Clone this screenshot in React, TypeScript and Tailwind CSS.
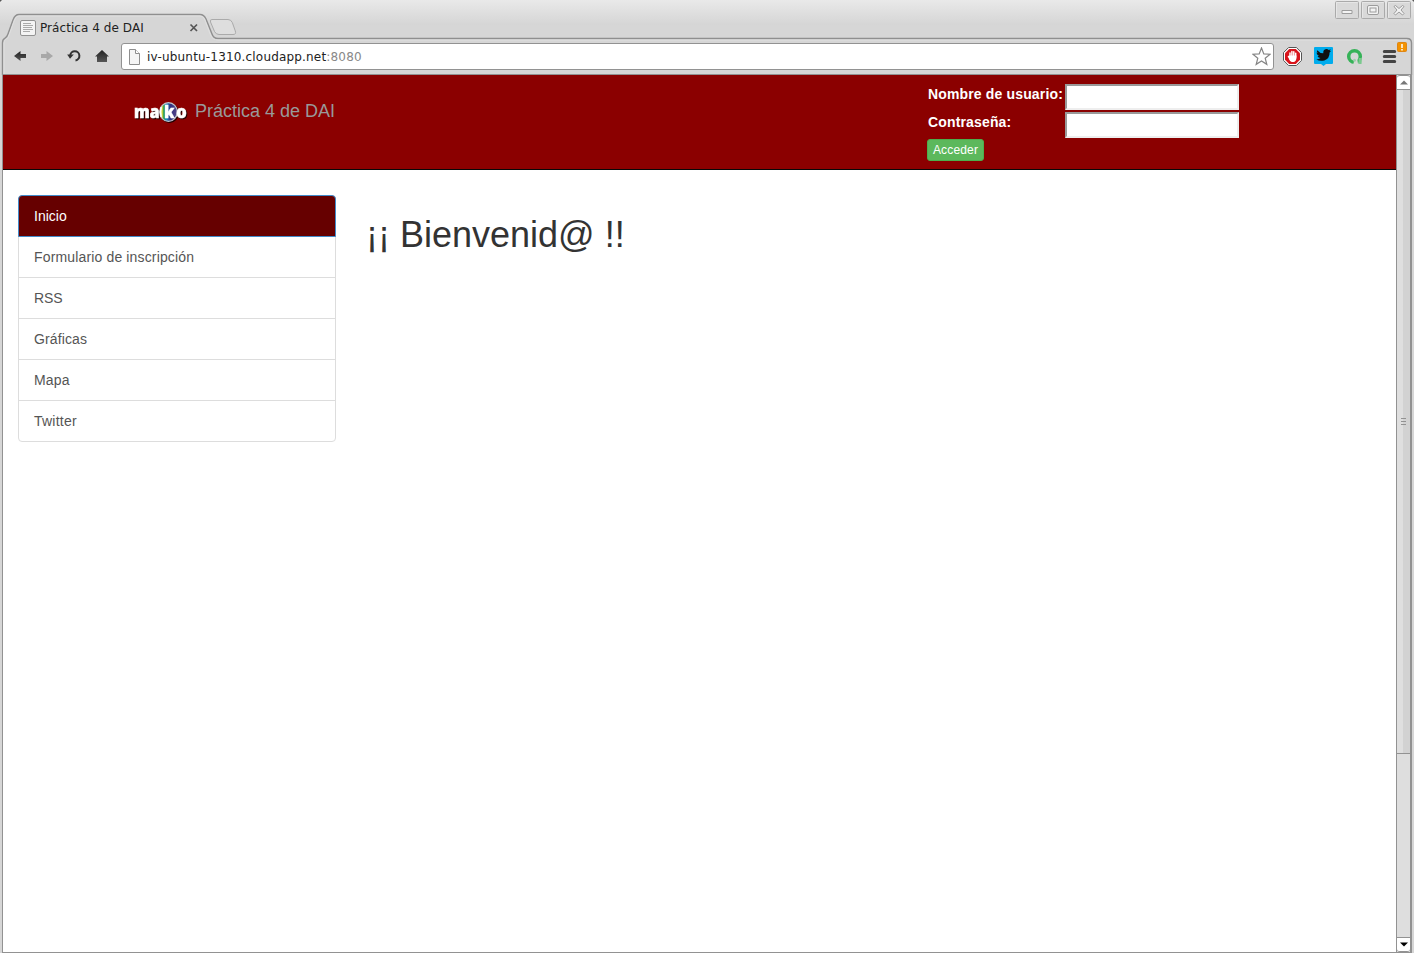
import type { ReactNode } from "react";

const menu = [
  { label: "Inicio", spacing: "tracking-normal" },
  { label: "Formulario de inscripción", spacing: "tracking-[0.15px]" },
  { label: "RSS", spacing: "tracking-[-0.1px]" },
  { label: "Gráficas", spacing: "tracking-[0.12px]" },
  { label: "Mapa", spacing: "tracking-[0.2px]" },
  { label: "Twitter", spacing: "tracking-[0.22px]" },
];

function TabStrip() {
  return (
    <header className="relative flex h-[38px] shrink-0 items-start justify-between">
      <svg className="absolute left-0 top-0" width="1414" height="75" viewBox="0 0 1414 75" fill="none">
        <defs>
          <linearGradient id="strip" x1="0" y1="0" x2="0" y2="1">
            <stop offset="0" stopColor="#e9e9e9" />
            <stop offset="1" stopColor="#d5d5d5" />
          </linearGradient>
        </defs>
        <rect width="1414" height="25" fill="url(#strip)" />
        <path d="M0 0h2L0 2zM1412 0h2v2z" fill="#555" />
        <path d="M2.500 80V43Q2.500 39.500 5 38.200Q7 37 8 34L13 20Q15 14.500 19 14.500H200Q204 14.500 206 19L212 34Q213.500 38.500 218 38.500H1407Q1411.500 38.500 1411.500 43V80Z" fill="#d6d6d6" stroke="#8f8f8f" strokeWidth="1.4" />
        <path d="M4 76V43Q4 40 6.500 39Q8.500 38 9.500 34L14.500 20Q16 16 19 16H200Q203 16 204.500 19L210.500 35Q212.500 40 218 40H1407" stroke="#e0e0e0" />
        <path d="M212 19.500H228Q231 19.500 232.300 22.500L235.300 31Q236.500 34.500 233 34.500H219Q216 34.500 214.500 31.500L210.500 22Q209.600 19.500 212 19.500Z" fill="#dedede" stroke="#aaa" />
      </svg>
      <div className="relative ml-[20px] mt-[19px] flex h-[18px] w-[179px] items-start text-[12px] text-[#222]">
        <svg width="16" height="17" viewBox="0 0 16 17">
          <rect x=".5" y="1.500" width="15" height="15" rx="1.500" fill="#f4f4f4" stroke="#929292" />
          <path d="M3 4.500h8M3 6.500h10M3 8.500h9M3 10.500h10M3 12.500h7" stroke="#aaa" />
        </svg>
        <span className="ml-[4px] whitespace-nowrap leading-[18px] tracking-[0.06px]">Práctica 4 de DAI</span>
        <svg className="ml-auto mt-[4px]" width="10" height="10" viewBox="0 0 10 10">
          <path d="M1.500 1.500l6.500 6.500m0-6.500l-6.500 6.500" stroke="#555" strokeWidth="1.700" />
        </svg>
      </div>
      <div className="relative mr-[3px] mt-[1px] flex gap-[2px]">
        <WindowButton><path d="M7.500 9.500h10v3h-10z" /></WindowButton>
        <WindowButton><rect x="7" y="4.500" width="11" height="9" rx="1.500" /><rect x="9.500" y="7" width="6" height="4" /></WindowButton>
        <WindowButton><path d="M7.500 5.500l1.500-1 3.500 3 3.500-3 1.500 1-3 3.500 3 3.500-1.500 1.500-3.500-3-3.500 3-1.500-1.500 3-3.500z" /></WindowButton>
      </div>
    </header>
  );
}

function WindowButton({ children }: { children: ReactNode }) {
  return (
    <svg width="24" height="18" viewBox="0 0 24 18">
      <rect x=".5" y=".5" width="23" height="17" rx="1" fill="#d9d9d9" stroke="#aaa" />
      <path d="M1.500 16.500v-15h21" stroke="#e6e6e6" fill="none" />
      <g fill="#f3f3f3" stroke="#9c9c9c" transform="translate(-.5)">{children}</g>
    </svg>
  );
}

function Toolbar() {
  return (
    <div className="relative mx-[2px] flex h-[37px] shrink-0 items-start border-b border-[#929292]">
      <svg className="shrink-0" width="119" height="36" viewBox="2 38 119 36">
        <defs>
          <linearGradient id="dark" x1="0" y1="0" x2="0" y2="1">
            <stop offset="0" stopColor="#222" />
            <stop offset="1" stopColor="#565656" />
          </linearGradient>
        </defs>
        <path d="M14 56l6.500-5v3H26v4h-5.500v3z" fill="url(#dark)" />
        <path d="M53 56l-6.500-5v3H41v4h5.500v3z" fill="#a8a8a8" />
        <path d="M70.200 55.500a4.600 4.600 0 1 1 5.300 4.900" fill="none" stroke="#333" strokeWidth="2" />
        <path d="M67.200 54.500h6.600L70 58.800z" fill="#333" />
        <path d="M102 50l7 6.500h-2V62H97v-5.500h-2z" fill="url(#dark)" />
      </svg>
      <div className="mt-[5px] flex h-[27px] w-[1153px] shrink-0 items-center rounded-[3px] border border-[#929292] bg-white pl-[6px] pr-[2px] text-[12px]">
        <svg className="shrink-0" width="13" height="16" viewBox="0 0 13 16">
          <path d="M1.500.5h6l4 4v11h-10z" fill="#f5f5f5" stroke="#8e8e8e" />
          <path d="M7.500.5v4h4" fill="#fff" stroke="#8e8e8e" />
        </svg>
        <span className="ml-[6px] tracking-[0.18px] text-[#222]">iv-ubuntu-1310.cloudapp.net<span className="text-[#888]">:8080</span></span>
        <svg className="ml-auto" width="19" height="19" viewBox="0 0 19 19">
          <path d="M9.500 1l2.300 5.900 6.300.3-4.900 4 1.600 6.100-5.300-3.400-5.300 3.400 1.600-6.100-4.900-4 6.300-.3z" fill="#fff" stroke="#858585" strokeWidth="1.200" />
        </svg>
      </div>
      <svg className="shrink-0" width="136" height="36" viewBox="1274 38 136 36">
        <path d="M1288.600 47.500h7.800l5.100 5.100v7.800l-5.100 5.100h-7.800l-5.100-5.100v-7.800z" fill="#fff" stroke="#555" />
        <path d="M1289.200 49h6.600l4.200 4.200v6.600l-4.200 4.200h-6.600l-4.200-4.200v-6.600z" fill="#d8141b" />
        <path d="M1290 53v4M1291.900 51.500v5M1293.800 51.700v5M1295.700 53.200v4M1288.500 56.500l2.200 3.500" stroke="#fff" strokeWidth="1.500" strokeLinecap="round" />
        <path d="M1289.200 55.500h7.200v3q-.5 3.300-2.900 3.500h-1.800q-2-.5-2.500-3z" fill="#fff" />
        <path d="M1315 47H1332q1 0 1 1v15q0 1-1 1h-6l-2.500 2-2.500-2h-6q-1 0-1-1V48q0-1 1-1z" fill="#00aced" />
        <path transform="translate(0 .7)" d="M1317.300 49.500q2.400 3 6 3.100-.4-4 3-4.300 1.400 0 2.500 1.100l2-.8-1.200 1.800 1.600-.4-1.600 1.700q.1 6.200-5.300 8-4.400 1.300-8-1 2.500.1 4.200-1.300-2.200-.2-3-2.200h1.500q-2.400-1-2.500-3.300l1.400.4q-1.700-1.400-.6-2.800z" fill="#111" />
        <circle cx="1354.500" cy="56.500" r="5.800" fill="none" stroke="#36b258" strokeWidth="3.500" />
        <path d="M1353.200 64.500l1.500-5.500h2.600l.8 5.500z" fill="#d6d6d6" />
        <path d="M1358.800 58h3.200l-.5 6h-3.200z" fill="#7bc98e" />
        <circle cx="1354.500" cy="60.200" r="1.500" fill="#9ccfaa" />
        <path d="M1384.300 51.500h10.400M1384.300 56.500h10.400M1384.300 61.500h10.400" stroke="#444" strokeWidth="3" strokeLinecap="round" />
        <rect x="1397.500" y="42.500" width="9" height="9" rx="1" fill="#f39200" stroke="#df8613" />
        <path d="M1402 44v4M1402 49v1.500" stroke="#fff" strokeWidth="1.500" />
      </svg>
    </div>
  );
}

function MakoLogo() {
  return (
    <svg className="overflow-visible drop-shadow-[1px_1px_0.5px_#200000]" width="56" height="24" viewBox="0 0 56 24" role="img" aria-label="mako">
      <defs>
        <linearGradient id="globe">
          <stop offset="0" stopColor="#fff" /><stop offset=".14" stopColor="#e0d83a" />
          <stop offset=".24" stopColor="#159655" /><stop offset=".38" stopColor="#168bc5" />
          <stop offset=".6" stopColor="#313080" /><stop offset="1" stopColor="#564487" />
        </linearGradient>
      </defs>
      <text x="1" y="17.600" fill="#fff" stroke="#fff" strokeWidth=".6" textLength="25.500" lengthAdjust="spacingAndGlyphs" className="font-['Open_Sans',sans-serif] text-[17px] font-extrabold">ma</text>
      <ellipse cx="35.500" cy="12" rx="8.800" ry="9.300" fill="url(#globe)" stroke="#c4c4cc" strokeWidth="1.300" />
      <path d="M28.200 7q-1.500 5 0 10" fill="none" stroke="#fff" strokeWidth="1.500" />
      <g className="font-['Open_Sans',sans-serif] text-[17px] font-extrabold">
        <text x="31" y="17.600" fill="#fff" stroke="#fff" strokeWidth=".4" textLength="10.500" lengthAdjust="spacingAndGlyphs">k</text>
        <text x="43.200" y="17.600" fill="#fff" stroke="#fff" strokeWidth=".5" textLength="10.500" lengthAdjust="spacingAndGlyphs">o</text>
      </g>
    </svg>
  );
}

function Field({ label, type }: { label: string; type: string }) {
  return (
    <label className="flex h-[26px] items-start justify-between">
      <span className="whitespace-nowrap pl-px text-[14px] font-bold leading-[20px] tracking-[0.15px]">{label}</span>
      <input type={type} className="h-[26px] w-[174px] border-2 border-b-[#eee] border-l-[#9a9a9a] border-r-[#eee] border-t-[#9a9a9a] bg-white px-1 text-black outline-none" />
    </label>
  );
}

function Scrollbar() {
  return (
    <div className="flex w-[16px] shrink-0 flex-col border-l border-r-2 border-[#929292] bg-[#dedede]">
      <div className="flex h-[15px] items-center justify-center rounded-t-[3px] border-b border-t border-[#929292] bg-white">
        <svg width="8" height="5" viewBox="0 0 8 5"><path d="M0 4.500h8L4 .5z" fill="#777" /></svg>
      </div>
      <div className="flex h-[664px] items-center justify-center border-b border-[#929292] bg-linear-to-r from-[#dfdfdf] from-50% to-[#d2d2d2] to-50%">
        <svg className="mb-px" width="5" height="7" viewBox="0 0 5 7"><path d="M0 .5h5M0 3.500h5M0 6.500h5" stroke="#929292" /></svg>
      </div>
      <div className="flex-1" />
      <div className="flex h-[15px] items-center justify-center rounded-b-[3px] border-b border-t border-[#929292] bg-white">
        <svg width="8" height="5" viewBox="0 0 8 5"><path d="M0 .5h8L4 4.500z" fill="#000" /></svg>
      </div>
    </div>
  );
}

export default function App() {
  return (
    <div className="flex h-[953px] w-[1414px] flex-col overflow-hidden bg-[#d6d6d6] font-['DejaVu_Sans',sans-serif]">
      <TabStrip />
      <Toolbar />
      <div className="ml-[2px] mr-[2px] flex min-h-0 flex-1 border-b border-l border-[#929292] font-['Liberation_Sans',sans-serif]">
        <div className="min-w-0 flex-1 bg-white text-[#333]">
          <nav className="flex h-[95px] items-start justify-between border-b border-[#080808] bg-[#8b0000] pl-[130px] pr-[157px] text-white">
            <a className="mt-[25px] flex items-center whitespace-nowrap text-[18px] leading-[22px] text-[#999]">
              <MakoLogo />
              <span className="-mt-[2px] ml-[6px]">Práctica 4 de DAI</span>
            </a>
            <form className="flex w-[312px] flex-col gap-[2px] pt-[9px]">
              <Field label="Nombre de usuario:" type="text" />
              <Field label="Contraseña:" type="password" />
              <button type="button" className="-mt-px h-[22px] w-[57px] rounded-[3px] border border-[#4cae4c] bg-[#5cb85c] text-[12px] leading-[18px] tracking-[0.15px]">Acceder</button>
            </form>
          </nav>
          <div className="flex px-[15px] pt-[25px]">
            <ul className="w-[318px] text-[14px] leading-[20px]">
              {menu.map(({ label, spacing }, i) => (
                <li key={label} className={`${spacing} ${i === 0 ? "relative -mb-px h-[42px] rounded-t-[4px] border border-[#428bca] bg-[#660000] px-[15px] py-[10px] text-white" : "-mb-px h-[42px] border border-[#ddd] px-[15px] py-[10px] text-[#555] last:mb-0 last:rounded-b-[4px]"}`}>
                  {label}
                </li>
              ))}
            </ul>
            <h1 className="ml-[30px] mt-[20px] whitespace-nowrap text-[36px] leading-[40px]">¡¡ Bienvenid@ !!</h1>
          </div>
        </div>
        <Scrollbar />
      </div>
    </div>
  );
}
